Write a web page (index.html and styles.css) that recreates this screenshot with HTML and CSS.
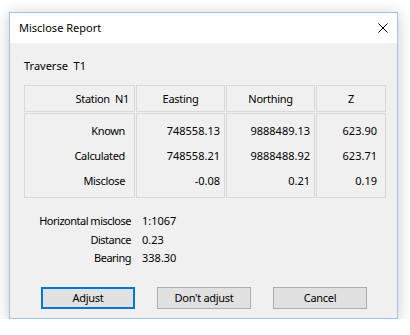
FILE: index.html
```html
<!DOCTYPE html>
<html>
<head>
<meta charset="utf-8">
<link rel="stylesheet" href="styles.css">
</head>
<body>
<div class="window">
  <div class="titlebar">
    <span class="title">Misclose Report</span>
    <svg class="close" width="10" height="10" viewBox="0 0 10 10"><path d="M0.5 0.5 L9.5 9.5 M9.5 0.5 L0.5 9.5" stroke="#000" stroke-width="1" fill="none"/></svg>
  </div>
  <div class="content">
    <div class="traverse">Traverse&nbsp; T1</div>
    <div class="table">
      <div class="cell head right">Station&nbsp; N1</div>
      <div class="cell head">Easting</div>
      <div class="cell head">Northing</div>
      <div class="cell head">Z</div>
      <div class="cell body labels">
        <div class="line">Known</div>
        <div class="line">Calculated</div>
        <div class="line">Misclose</div>
      </div>
      <div class="cell body vals">
        <div class="line">748558.13</div>
        <div class="line">748558.21</div>
        <div class="line">-0.08</div>
      </div>
      <div class="cell body vals">
        <div class="line">9888489.13</div>
        <div class="line">9888488.92</div>
        <div class="line">0.21</div>
      </div>
      <div class="cell body vals zvals">
        <div class="line">623.90</div>
        <div class="line">623.71</div>
        <div class="line">0.19</div>
      </div>
    </div>
    <div class="summary">
      <div class="slabel">Horizontal misclose</div><div class="sval">1:1067</div>
      <div class="slabel">Distance</div><div class="sval">0.23</div>
      <div class="slabel">Bearing</div><div class="sval">338.30</div>
    </div>
    <div class="buttons">
      <button class="btn default">Adjust</button>
      <button class="btn">Don't adjust</button>
      <button class="btn">Cancel</button>
    </div>
  </div>
</div>
</body>
</html>
```

FILE: styles.css
```css
html, body {
  margin: 0;
  padding: 0;
  background: #ffffff;
}
body {
  font-family: "Segoe UI", "Noto Sans", sans-serif;
  font-size: 11px;
  color: #000;
}
.window {
  margin-left: 9px;
  margin-top: 12px;
  width: 387px;
  height: 305px;
  border: 1px solid #9ec3ea;
  box-shadow: 0 2px 14px rgba(0, 0, 0, 0.22);
  display: flex;
  flex-direction: column;
  background: #f0f0f0;
}
.titlebar {
  height: 30px;
  background: #ffffff;
  display: flex;
  align-items: center;
  justify-content: space-between;
  padding-left: 9px;
  padding-right: 9px;
  flex: none;
}
.title {
  font-size: 11px;
  line-height: 16px;
  white-space: nowrap;
}
.close {
  display: block;
}
.content {
  flex: 1;
  padding-left: 14px;
  display: flex;
  flex-direction: column;
}
.traverse {
  margin-top: 15px;
  line-height: 16px;
  white-space: nowrap;
}
.table {
  margin-top: 11px;
  display: grid;
  grid-template-columns: 111px 89px 89px 70px;
  grid-template-rows: 27px 85px;
  column-gap: 1px;
  row-gap: 1px;
}
.cell {
  border: 1px solid #d9d9d9;
  box-sizing: border-box;
  white-space: nowrap;
}
.head {
  display: flex;
  align-items: center;
  justify-content: center;
  letter-spacing: -0.3px;
}
.head.right {
  justify-content: flex-end;
  padding-right: 5px;
}
.body {
  padding-top: 4px;
}
.line {
  height: 25px;
  line-height: 25px;
  text-align: right;
}
.labels {
  padding-right: 9px;
  letter-spacing: -0.35px;
}
.vals {
  padding-right: 4px;
}
.zvals {
  padding-right: 8px;
}
.summary {
  margin-top: 14px;
  display: grid;
  grid-template-columns: 107px auto;
  grid-auto-rows: 18.5px;
  column-gap: 11px;
  line-height: 18.5px;
  white-space: nowrap;
}
.slabel {
  text-align: right;
  letter-spacing: -0.5px;
}
.buttons {
  margin-top: 19px;
  padding-left: 17px;
  display: flex;
  gap: 22px;
}
.btn {
  width: 94px;
  height: 22px;
  box-sizing: border-box;
  border: 1px solid #adadad;
  background: #e1e1e1;
  font-family: "Segoe UI", "Noto Sans", sans-serif;
  font-size: 11px;
  letter-spacing: -0.3px;
  color: #000;
  padding: 0;
  margin: 0;
  white-space: nowrap;
}
.btn.default {
  border: 2px solid #0078d7;
}
```
